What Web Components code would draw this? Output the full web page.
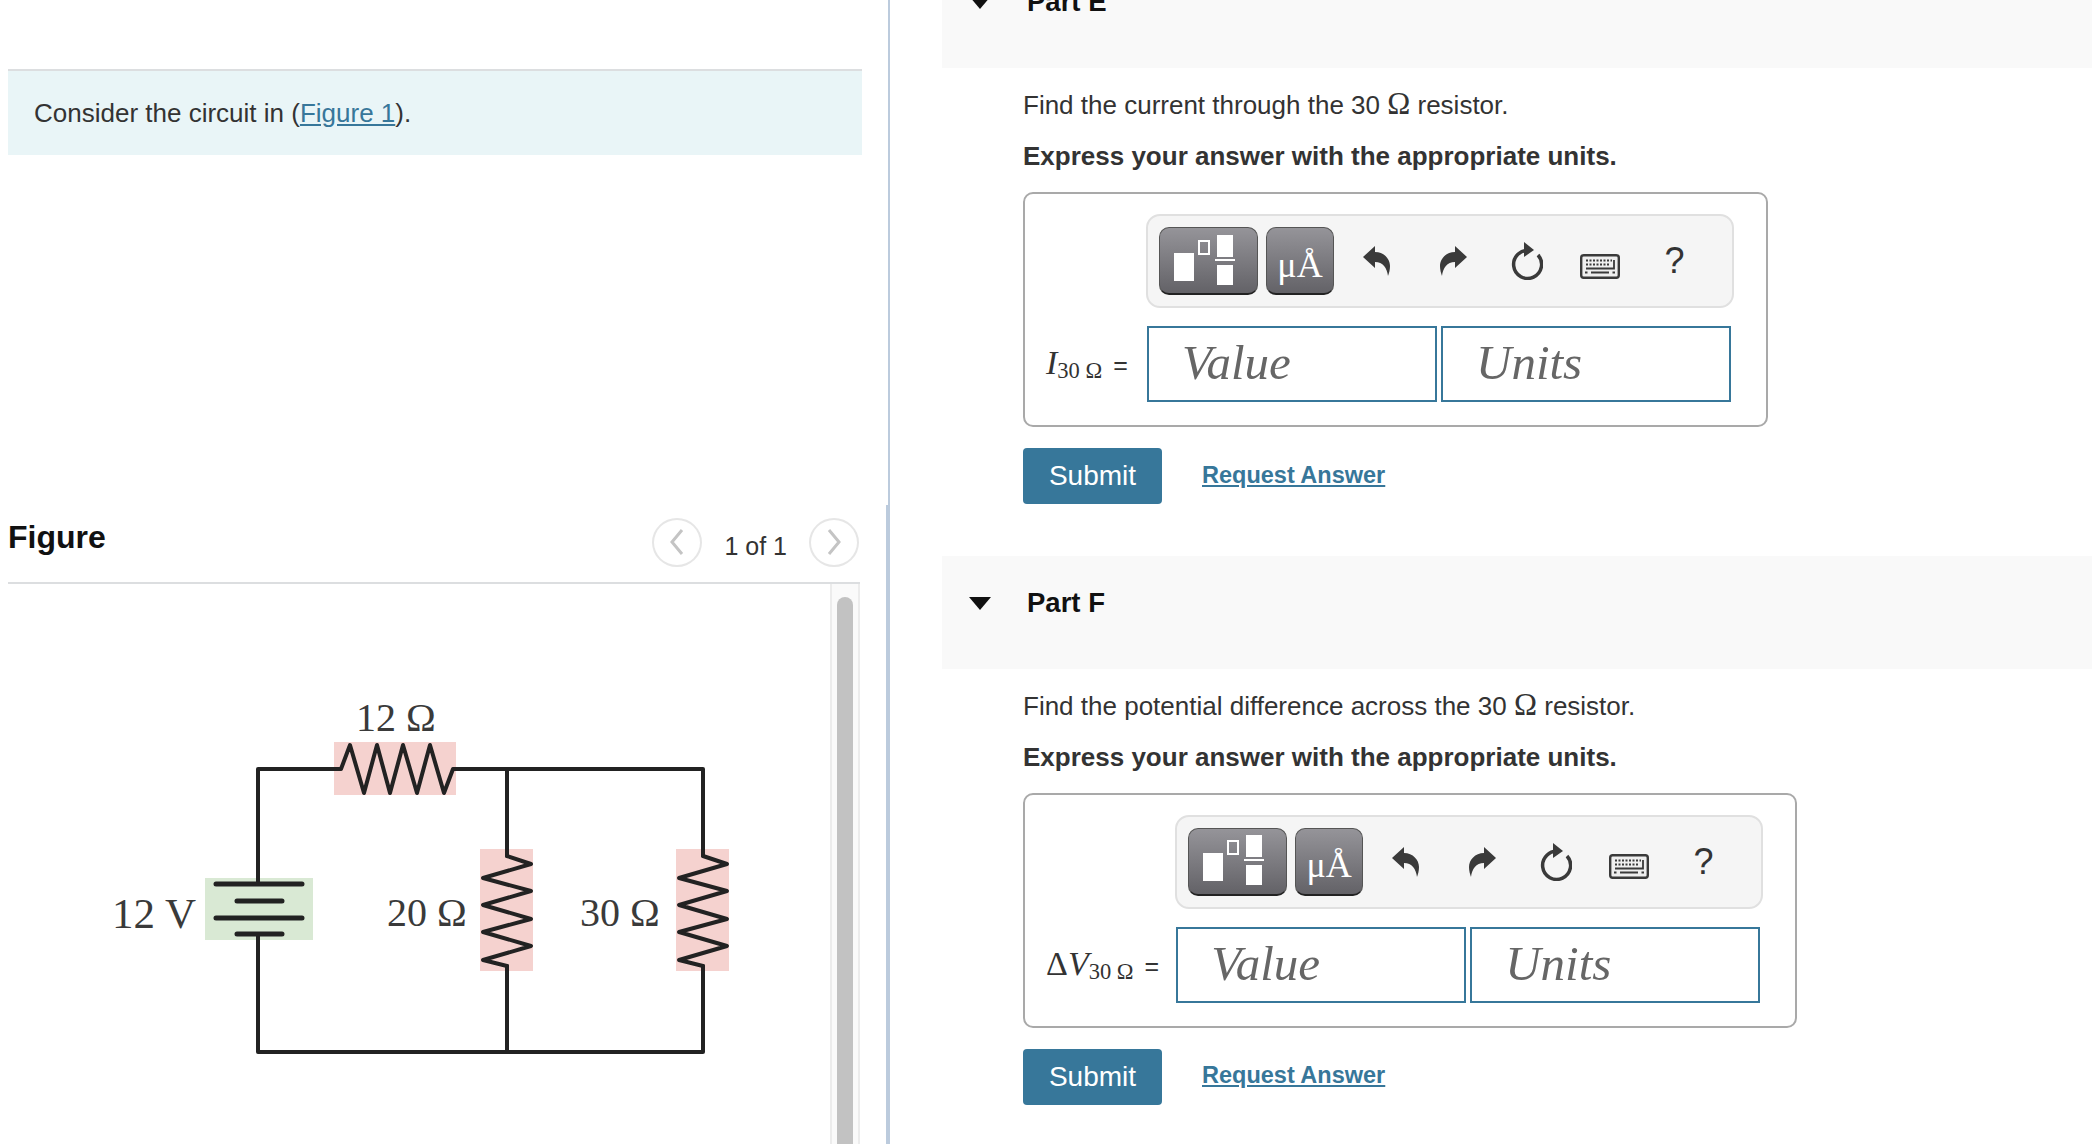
<!DOCTYPE html>
<html>
<head>
<meta charset="utf-8">
<title>Circuit</title>
<style>
  html, body { margin: 0; height: 100%; overflow: hidden; background: #fff; }
  body { font-family: "Liberation Sans", Arial, sans-serif; color: #333; }
</style>
</head>
<body>
<mp-page>
  <mp-intro slot="left">Consider the circuit in (<a>Figure 1</a>).</mp-intro>
  <mp-figure slot="left"></mp-figure>
  <mp-part slot="right" name="Part E" prompt="Find the current through the 30" after="resistor." var="<em>I</em>" box="745"></mp-part>
  <mp-part slot="right" name="Part F" prompt="Find the potential difference across the 30" after="resistor." var="Δ<em>V</em>" box="774"></mp-part>
</mp-page>

<script>
(function () {
  'use strict';

  const BLUE = '#37779a';

  class MpPage extends HTMLElement {
    constructor() {
      super();
      this.attachShadow({ mode: 'open' }).innerHTML = `
        <style>
          :host { display: flex; height: 1144px; overflow: hidden; }
          .left { width: 854px; flex: none; padding: 69px 26px 0 8px; }
          .rule { flex: none; width: 2px; background: #bccbdd; position: relative; }
          .rule::after { content: ''; position: absolute; left: -2px; right: 0; top: 505px; bottom: 0; background: #bccbdd; }
          .right { flex: 1; margin: -45px 0 0 52px; min-width: 0; }
        </style>
        <div class="left"><slot name="left"></slot></div>
        <div class="rule"></div>
        <div class="right"><slot name="right"></slot></div>`;
    }
  }

  class MpIntro extends HTMLElement {
    constructor() {
      super();
      this.attachShadow({ mode: 'open' }).innerHTML = `
        <style>
          :host {
            display: flex; align-items: center; box-sizing: border-box;
            height: 86px; padding: 0 26px; border-top: 2px solid #dcdee0;
            background: #e9f5f7; font-size: 26px; color: #333;
          }
          ::slotted(a) { color: ${BLUE}; text-decoration: underline; }
        </style>
        <div><slot></slot></div>`;
    }
  }

  class MpFigure extends HTMLElement {
    constructor() {
      super();
      this.attachShadow({ mode: 'open' }).innerHTML = `
        <style>
          :host { display: block; width: 852px; margin-top: 349px; }
          .head { display: flex; align-items: center; height: 78px; padding-right: 1px; border-bottom: 2px solid #dcdee0; }
          h2 { margin: -12px 0 0; flex: 1; font-size: 32px; font-weight: 700; color: #111; }
          .pager { display: flex; align-items: center; margin-top: -2px; }
          .pager span { font-size: 25px; margin: 8px 22px 0; color: #333; }
          .nav { width: 46px; height: 45px; border: 2px solid #e6e6e6; border-radius: 50%; display: flex; align-items: center; justify-content: center; }
          .nav svg { display: block; }
          .body { display: flex; height: 560px; }
          .canvas { flex: 1; }
          .canvas svg { display: block; }
          .bar { width: 30px; box-sizing: border-box; border-left: 2px solid #ececec; border-right: 2px solid #ececec; background: #fafafa; padding-top: 13px; }
          .thumb { width: 16px; height: 100%; margin: 0 auto; background: #c2c2c2; border-radius: 8px 8px 0 0; }
        </style>
        <div class="head">
          <h2>Figure</h2>
          <div class="pager">
            <div class="nav"><svg width="16" height="28" viewBox="0 0 16 28" fill="none" stroke="#c4c4c4" stroke-width="3"><path d="M13 2 3 14l10 12"/></svg></div>
            <span>1 of 1</span>
            <div class="nav"><svg width="16" height="28" viewBox="0 0 16 28" fill="none" stroke="#c4c4c4" stroke-width="3"><path d="M3 2l10 12L3 26"/></svg></div>
          </div>
        </div>
        <div class="body">
          <div class="canvas">
            <svg width="822" height="559" viewBox="8 585 822 559">
              <g fill="#f5d2cf">
                <rect x="334" y="743" width="122" height="53"/>
                <rect x="480" y="850" width="53" height="122"/>
                <rect x="676" y="850" width="53" height="122"/>
              </g>
              <rect x="205" y="879" width="108" height="62" fill="#d9e9d4"/>
              <g fill="none" stroke="#222" stroke-width="4" stroke-linejoin="round" stroke-linecap="round">
                <path d="M258 885V770H341L350 746 364 794 377 746 390 794 403 746 417 794 430 746 444 794 453 770H703V857M258 935V1053H703V967M507 770V857M507 967V1053"/>
                <path d="M507 857 531 865 483 879 531 892 483 906 531 920 483 933 531 947 483 961 507 967"/>
                <path d="M703 857 727 865 679 879 727 892 679 906 727 920 679 933 727 947 679 961 703 967"/>
                <path d="M216 885H302M237 902H282M216 919H302M237 935H282" stroke-width="5"/>
              </g>
              <g font-family="'Liberation Serif', serif" fill="#3a3a3a">
                <text x="356" y="732" font-size="40">12 Ω</text>
                <text x="112" y="929" font-size="43">12 V</text>
                <text x="387" y="927" font-size="40">20 Ω</text>
                <text x="580" y="927" font-size="40">30 Ω</text>
              </g>
            </svg>
          </div>
          <div class="bar"><div class="thumb"></div></div>
        </div>`;
    }
  }

  class MpPart extends HTMLElement {
    connectedCallback() {
      const root = this.shadowRoot || this.attachShadow({ mode: 'open' });
      root.innerHTML = `
        <style>
          :host { display: block; height: 600.5px; }
          .band { display: flex; height: 113px; background: #f9f9f9; padding: 32px 0 0 28px; box-sizing: border-box; }
          .tri { width: 0; height: 0; margin: 9px 0 0 -1px; border: 11.5px solid transparent; border-top: 13px solid #111; border-bottom: 0; }
          .band b { margin-left: 36px; font-size: 27.5px; line-height: 30px; color: #111; }
          .body { padding: 0 0 0 81px; }
          p { margin: 0; font-size: 26px; color: #333; }
          p.q { padding-top: 20px; line-height: 32px; }
          p.q i { font: 400 31px/32px "Liberation Serif", serif; }
          p.x { padding-top: 19px; line-height: 32px; font-weight: 700; }
          .box { box-sizing: border-box; width: ${this.getAttribute('box')}px; height: 235px; margin-top: 20px; padding: 20px 32px 0 21px; border: 2px solid #a9a9a9; border-radius: 10px; }
          .grid { display: grid; grid-template-columns: auto 588px; column-gap: 16px; row-gap: 18px; align-items: center; }
          .bar { grid-column: 2; display: flex; align-items: center; box-sizing: border-box; height: 94px; padding-left: 11px; border: 2px solid #e0e0e0; border-radius: 14px; background: #f5f5f5; }
          .btn { box-sizing: border-box; flex: none; height: 68px; border: 1px solid #555; border-bottom: 2px solid #222; border-radius: 10px; background: linear-gradient(#959499, #636267); display: flex; align-items: center; justify-content: center; }
          .btn svg { flex: none; }
          .b1 { width: 99px; margin-right: 8px; }
          .b2 { width: 68px; padding-top: 8px; color: #fff; font: 400 36px "Liberation Serif", serif; }
          .ic { flex: none; display: flex; justify-content: center; align-items: center; color: #3a3a3a; }
          .lbl { font: 400 34px "Liberation Serif", serif; color: #333; white-space: nowrap; margin-top: -2px; }
          .lbl sub { font-size: 22.5px; line-height: 0; vertical-align: -4px; }
          .lbl u { font: 400 25px "Liberation Sans", sans-serif; text-decoration: none; margin-left: 11px; }
          .ins { display: flex; gap: 4px; margin: 0 3px 0 1px; }
          .in { box-sizing: border-box; flex: 1; height: 76px; border: 2px solid ${BLUE}; padding-left: 33px; font: italic 400 49px/70px "Liberation Serif", serif; color: #666; }
          .act { display: flex; align-items: center; margin-top: 21px; }
          .sub { box-sizing: border-box; width: 139px; height: 56px; border-radius: 4px; background: ${BLUE}; color: #fff; font-size: 28px; display: flex; align-items: center; justify-content: center; }
          a { margin: -2px 0 0 40px; color: ${BLUE}; font-weight: 700; font-size: 23.5px; text-decoration: underline; }
        </style>
        <div class="band"><div class="tri"></div><b>${this.getAttribute('name')}</b></div>
        <div class="body">
          <p class="q">${this.getAttribute('prompt')} <i>Ω</i> ${this.getAttribute('after')}</p>
          <p class="x">Express your answer with the appropriate units.</p>
          <div class="box">
            <div class="grid">
              <div class="bar">
                <div class="btn b1"><svg width="99" height="68" viewBox="0 0 99 68" fill="#fff"><rect x="15" y="26" width="20" height="28"/><rect x="40" y="14" width="10" height="13" fill="none" stroke="#fff" stroke-width="2"/><rect x="58" y="8" width="16" height="22"/><rect x="56" y="32" width="20" height="2"/><rect x="58" y="38" width="16" height="20"/></svg></div>
                <div class="btn b2">μÅ</div>
                <div class="ic" style="width:85px"><svg width="27" height="30" viewBox="0 0 27 30" fill="currentColor"><path d="M0 11 12 0V6C21 6 27 13 27 20 27 24 26 27 25 30 24 22 20 16 12 16V22Z"/></svg></div>
                <div class="ic" style="width:68px"><svg width="27" height="30" viewBox="0 0 27 30" fill="currentColor"><path d="M27 11 15 0V6C6 6 0 13 0 20 0 24 1 27 2 30 3 22 7 16 15 16V22Z"/></svg></div>
                <div class="ic" style="width:78px"><svg width="34" height="38" viewBox="0 0 34 38" fill="none"><path d="M21 8.6A14 14 0 1 0 29 13" stroke="currentColor" stroke-width="3.5"/><path d="M15 0 25 8 15 15Z" fill="currentColor"/></svg></div>
                <div class="ic" style="width:70px"><svg width="40" height="25" viewBox="0 0 40 25" style="margin-top:10px"><rect x="1.2" y="1.2" width="37.6" height="22.6" rx="2.5" fill="#efefef" stroke="currentColor" stroke-width="2.4"/><path d="M6 6.5H32M6 10.5H29" stroke="currentColor" stroke-width="2" stroke-dasharray="2 1.5" fill="none"/><path d="M34 6V14.5H6M11 18.5H29" stroke="currentColor" stroke-width="1.8" fill="none"/><path d="M5 17.5h2.5v2H5zM32.5 17.5h2.5v2h-2.5z" fill="currentColor"/></svg></div>
                <div class="ic" style="width:79px;font-size:36px;color:#333">?</div>
              </div>
              <div class="lbl">${this.getAttribute('var')}<sub>30 Ω</sub><u>=</u></div>
              <div class="ins"><div class="in">Value</div><div class="in">Units</div></div>
            </div>
          </div>
          <div class="act"><div class="sub">Submit</div><a>Request Answer</a></div>
        </div>`;
    }
  }

  customElements.define('mp-page', MpPage);
  customElements.define('mp-intro', MpIntro);
  customElements.define('mp-figure', MpFigure);
  customElements.define('mp-part', MpPart);
})();
</script>
</body>
</html>
